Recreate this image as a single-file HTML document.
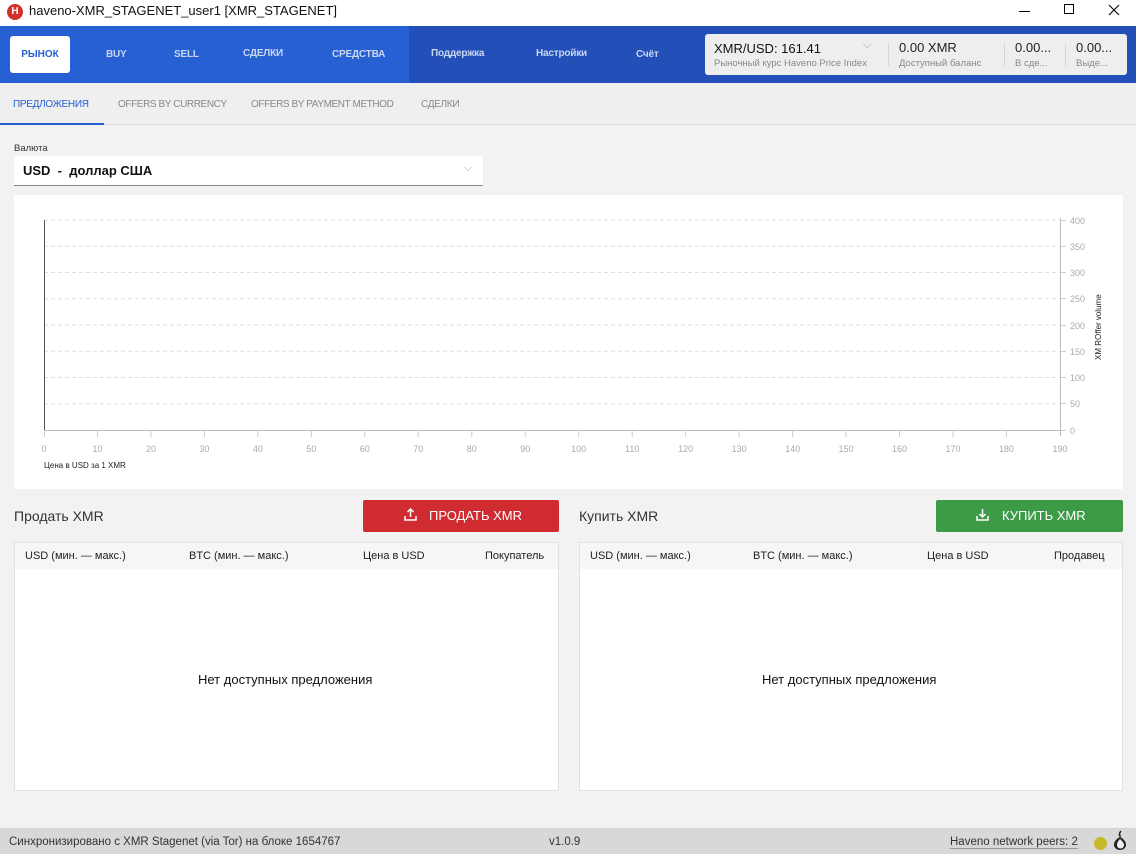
<!DOCTYPE html>
<html><head><meta charset="utf-8"><style>
*{box-sizing:border-box;margin:0;padding:0}
body{width:1136px;height:854px;overflow:hidden;background:#f2f2f2;font-family:"Liberation Sans","Noto Sans CJK SC",sans-serif;position:relative;color:#222}
.a{position:absolute;white-space:nowrap}
.nav{font-size:10px;font-weight:bold;color:#c9d6f2;letter-spacing:-0.2px}
</style></head><body>
<div class="a" style="left:0;top:0;width:1136px;height:26px;background:#fff"></div>
<div class="a" style="left:7px;top:4px;width:16px;height:16px;border-radius:50%;background:#d3302b;color:#fff;font-size:10px;font-weight:bold;text-align:center;line-height:16px">H</div>
<div class="a" style="left:29px;top:3px;font-size:13px;color:#111">haveno-XMR_STAGENET_user1 [XMR_STAGENET]</div>
<div class="a" style="left:1019px;top:11px;width:11px;height:1px;background:#000"></div>
<div class="a" style="left:1064px;top:4px;width:10px;height:10px;border:1px solid #000"></div>
<svg class="a" style="left:1108px;top:4px" width="12" height="12"><path d="M1 1L11 11M11 1L1 11" stroke="#000" stroke-width="1.1"/></svg>
<div class="a" style="left:0;top:26px;width:409px;height:57px;background:#2660d3"></div>
<div class="a" style="left:409px;top:26px;width:727px;height:57px;background:#2350b8"></div>
<div class="a" style="left:10px;top:36px;width:60px;height:37px;background:#fff;border-radius:3px;color:#2660d3;font-size:10px;font-weight:bold;text-align:center;line-height:37px">РЫНОК</div>
<div class="a nav" style="left:106px;top:49px">BUY</div>
<div class="a nav" style="left:174px;top:49px">SELL</div>
<div class="a nav" style="left:243px;top:48px">СДЕЛКИ</div>
<div class="a nav" style="left:332px;top:49px">СРЕДСТВА</div>
<div class="a nav" style="left:431px;top:48px">Поддержка</div>
<div class="a nav" style="left:536px;top:48px">Настройки</div>
<div class="a nav" style="left:636px;top:49px">Счёт</div>
<div class="a" style="left:705px;top:34px;width:422px;height:41px;background:#eeeeee;border-radius:3px"></div>
<div class="a" style="left:714px;top:41px;font-size:13px;color:#111">XMR/USD: 161.41</div>
<div class="a" style="left:714px;top:58px;font-size:9.5px;color:#888">Рыночный курс Haveno Price Index</div>
<div class="a" style="left:863px;top:39px;font-size:11px;color:#999">⌵</div>
<div class="a" style="left:888px;top:44px;width:1px;height:22px;background:#d5d5d5"></div>
<div class="a" style="left:899px;top:40px;font-size:13px;color:#222">0.00 XMR</div>
<div class="a" style="left:899px;top:58px;font-size:9.5px;color:#888">Доступный баланс</div>
<div class="a" style="left:1004px;top:44px;width:1px;height:22px;background:#d5d5d5"></div>
<div class="a" style="left:1015px;top:40px;font-size:13px;color:#222">0.00...</div>
<div class="a" style="left:1015px;top:58px;font-size:9.5px;color:#888">В сде...</div>
<div class="a" style="left:1065px;top:44px;width:1px;height:22px;background:#d5d5d5"></div>
<div class="a" style="left:1076px;top:40px;font-size:13px;color:#222">0.00...</div>
<div class="a" style="left:1076px;top:58px;font-size:9.5px;color:#888">Выде...</div>
<div class="a" style="left:0;top:83px;width:1136px;height:42px;background:#efefef;border-bottom:1px solid #dcdcdc"></div>
<div class="a" style="left:0;top:123px;width:104px;height:2px;background:#2660d3"></div>
<div class="a" style="left:13px;top:99px;font-size:10px;color:#2660d3;letter-spacing:-0.3px">ПРЕДЛОЖЕНИЯ</div>
<div class="a" style="left:118px;top:99px;font-size:10px;color:#888;letter-spacing:-0.4px">OFFERS BY CURRENCY</div>
<div class="a" style="left:251px;top:99px;font-size:10px;color:#888;letter-spacing:-0.4px">OFFERS BY PAYMENT METHOD</div>
<div class="a" style="left:421px;top:99px;font-size:10px;color:#888;letter-spacing:-0.3px">СДЕЛКИ</div>
<div class="a" style="left:14px;top:143px;font-size:9.5px;color:#333">Валюта</div>
<div class="a" style="left:14px;top:156px;width:469px;height:30px;background:#fff;border-bottom:1px solid #888;border-radius:3px 3px 0 0"></div>
<div class="a" style="left:23px;top:163px;font-size:13px;color:#111;font-weight:bold;white-space:pre">USD  -  доллар США</div>
<div class="a" style="left:464px;top:162px;font-size:11px;color:#aaa">⌵</div>
<div class="a" style="left:14px;top:195px;width:1109px;height:294px;background:#fff"></div>
<svg class="a" style="left:0;top:0" width="1136" height="854" font-family="Liberation Sans, sans-serif" font-size="9" fill="#aaa">
<g stroke="#ddd" stroke-dasharray="4,3">
<line x1="44" y1="220" x2="1060" y2="220"/><line x1="44" y1="246.25" x2="1060" y2="246.25"/><line x1="44" y1="272.5" x2="1060" y2="272.5"/><line x1="44" y1="298.75" x2="1060" y2="298.75"/><line x1="44" y1="325" x2="1060" y2="325"/><line x1="44" y1="351.25" x2="1060" y2="351.25"/><line x1="44" y1="377.5" x2="1060" y2="377.5"/><line x1="44" y1="403.75" x2="1060" y2="403.75"/>
</g>
<line x1="44.5" y1="220" x2="44.5" y2="430" stroke="#555"/>
<line x1="44" y1="430.5" x2="1060" y2="430.5" stroke="#bbb"/>
<line x1="1060.5" y1="218" x2="1060.5" y2="436" stroke="#bbb"/>
<g stroke="#ccc">
<line x1="1060" y1="220.5" x2="1066" y2="220.5"/><line x1="1060" y1="246.5" x2="1066" y2="246.5"/><line x1="1060" y1="272.5" x2="1066" y2="272.5"/><line x1="1060" y1="298.5" x2="1066" y2="298.5"/><line x1="1060" y1="325.5" x2="1066" y2="325.5"/><line x1="1060" y1="351.5" x2="1066" y2="351.5"/><line x1="1060" y1="377.5" x2="1066" y2="377.5"/><line x1="1060" y1="403.5" x2="1066" y2="403.5"/><line x1="1060" y1="430.5" x2="1066" y2="430.5"/>
</g>
<g>
<text x="1070" y="224">400</text><text x="1070" y="250">350</text><text x="1070" y="276">300</text><text x="1070" y="302">250</text><text x="1070" y="329">200</text><text x="1070" y="355">150</text><text x="1070" y="381">100</text><text x="1070" y="407">50</text><text x="1070" y="434">0</text>
</g>
<text transform="translate(1101,360) rotate(-90)" fill="#222" font-size="8">XM ROffer volume</text>
<g stroke="#ccc">
<line x1="44.5" y1="430" x2="44.5" y2="437"/><line x1="97.5" y1="430" x2="97.5" y2="437"/><line x1="151" y1="430" x2="151" y2="437"/><line x1="204.4" y1="430" x2="204.4" y2="437"/><line x1="257.9" y1="430" x2="257.9" y2="437"/><line x1="311.4" y1="430" x2="311.4" y2="437"/><line x1="364.8" y1="430" x2="364.8" y2="437"/><line x1="418.3" y1="430" x2="418.3" y2="437"/><line x1="471.8" y1="430" x2="471.8" y2="437"/><line x1="525.2" y1="430" x2="525.2" y2="437"/><line x1="578.7" y1="430" x2="578.7" y2="437"/><line x1="632.2" y1="430" x2="632.2" y2="437"/><line x1="685.6" y1="430" x2="685.6" y2="437"/><line x1="739.1" y1="430" x2="739.1" y2="437"/><line x1="792.6" y1="430" x2="792.6" y2="437"/><line x1="846" y1="430" x2="846" y2="437"/><line x1="899.5" y1="430" x2="899.5" y2="437"/><line x1="953" y1="430" x2="953" y2="437"/><line x1="1006.4" y1="430" x2="1006.4" y2="437"/>
</g>
<g text-anchor="middle">
<text x="44" y="452">0</text><text x="97.5" y="452">10</text><text x="151" y="452">20</text><text x="204.4" y="452">30</text><text x="257.9" y="452">40</text><text x="311.4" y="452">50</text><text x="364.8" y="452">60</text><text x="418.3" y="452">70</text><text x="471.8" y="452">80</text><text x="525.2" y="452">90</text><text x="578.7" y="452">100</text><text x="632.2" y="452">110</text><text x="685.6" y="452">120</text><text x="739.1" y="452">130</text><text x="792.6" y="452">140</text><text x="846" y="452">150</text><text x="899.5" y="452">160</text><text x="953" y="452">170</text><text x="1006.4" y="452">180</text><text x="1060" y="452">190</text>
</g>
<text x="44" y="468" fill="#222" font-size="8">Цена в USD за 1 XMR</text>
</svg>
<div class="a" style="left:14px;top:508px;font-size:14px;color:#333">Продать XMR</div>
<div class="a" style="left:363px;top:500px;width:196px;height:32px;background:#cf2b30;border-radius:2px;color:#fff;font-size:13px;line-height:32px;padding-left:66px">ПРОДАТЬ XMR</div>
<svg class="a" style="left:403px;top:507px" width="15" height="15" fill="none" stroke="#fff" stroke-width="1.5"><path d="M2 9v4h11V9M7.5 10V2M4.5 5l3-3 3 3"/></svg>
<div class="a" style="left:14px;top:542px;width:545px;height:249px;background:#fff;border:1px solid #e2e2e2"></div>
<div class="a" style="left:15px;top:543px;width:543px;height:26px;background:#f6f6f6"></div>
<div class="a" style="left:25px;top:550px;font-size:11px;color:#222">USD (мин. — макс.)</div>
<div class="a" style="left:189px;top:550px;font-size:11px;color:#222">BTC (мин. — макс.)</div>
<div class="a" style="left:363px;top:550px;font-size:11px;color:#222">Цена в USD</div>
<div class="a" style="left:485px;top:550px;font-size:11px;color:#222">Покупатель</div>
<div class="a" style="left:198px;top:672px;font-size:13px;color:#111">Нет доступных предложения</div>
<div class="a" style="left:579px;top:508px;font-size:14px;color:#333">Купить XMR</div>
<div class="a" style="left:936px;top:500px;width:187px;height:32px;background:#3d9b48;border-radius:2px;color:#fff;font-size:13px;line-height:32px;padding-left:66px">КУПИТЬ XMR</div>
<svg class="a" style="left:975px;top:507px" width="15" height="15" fill="none" stroke="#fff" stroke-width="1.5"><path d="M2 9v4h11V9M7.5 2v8M4.5 7l3 3 3-3"/></svg>
<div class="a" style="left:579px;top:542px;width:544px;height:249px;background:#fff;border:1px solid #e2e2e2"></div>
<div class="a" style="left:580px;top:543px;width:542px;height:26px;background:#f6f6f6"></div>
<div class="a" style="left:590px;top:550px;font-size:11px;color:#222">USD (мин. — макс.)</div>
<div class="a" style="left:753px;top:550px;font-size:11px;color:#222">BTC (мин. — макс.)</div>
<div class="a" style="left:927px;top:550px;font-size:11px;color:#222">Цена в USD</div>
<div class="a" style="left:1054px;top:550px;font-size:11px;color:#222">Продавец</div>
<div class="a" style="left:762px;top:672px;font-size:13px;color:#111">Нет доступных предложения</div>
<div class="a" style="left:0;top:828px;width:1136px;height:26px;background:#d8d8d8;border-top:1px solid #cfd8cf"></div>
<div class="a" style="left:9px;top:836px;font-size:11.5px;color:#333">Синхронизировано с XMR Stagenet (via Tor) на блоке 1654767</div>
<div class="a" style="left:549px;top:836px;font-size:11.5px;color:#333">v1.0.9</div>
<div class="a" style="left:950px;top:836px;font-size:11.5px;color:#333;border-bottom:1px solid #999">Haveno network peers: 2</div>
<div class="a" style="left:1094px;top:837px;width:13px;height:13px;border-radius:50%;background:#c8b92c"></div>
<svg class="a" style="left:1112px;top:830px" width="16" height="22"><path d="M9 1C7 3 7 5 8.5 7" stroke="#222" stroke-width="1.5" fill="none"/><path d="M8 7C4 9 2 12 2 15c0 3 3 5 6 5s6-2 6-5c0-3-2-6-6-8z" fill="#222"/><path d="M8 9c-2 2-3 4-3 6s1.5 3.5 3.5 3.5S12 17 12 15s-2-4-4-6z" fill="#eee"/></svg>
</body></html>
